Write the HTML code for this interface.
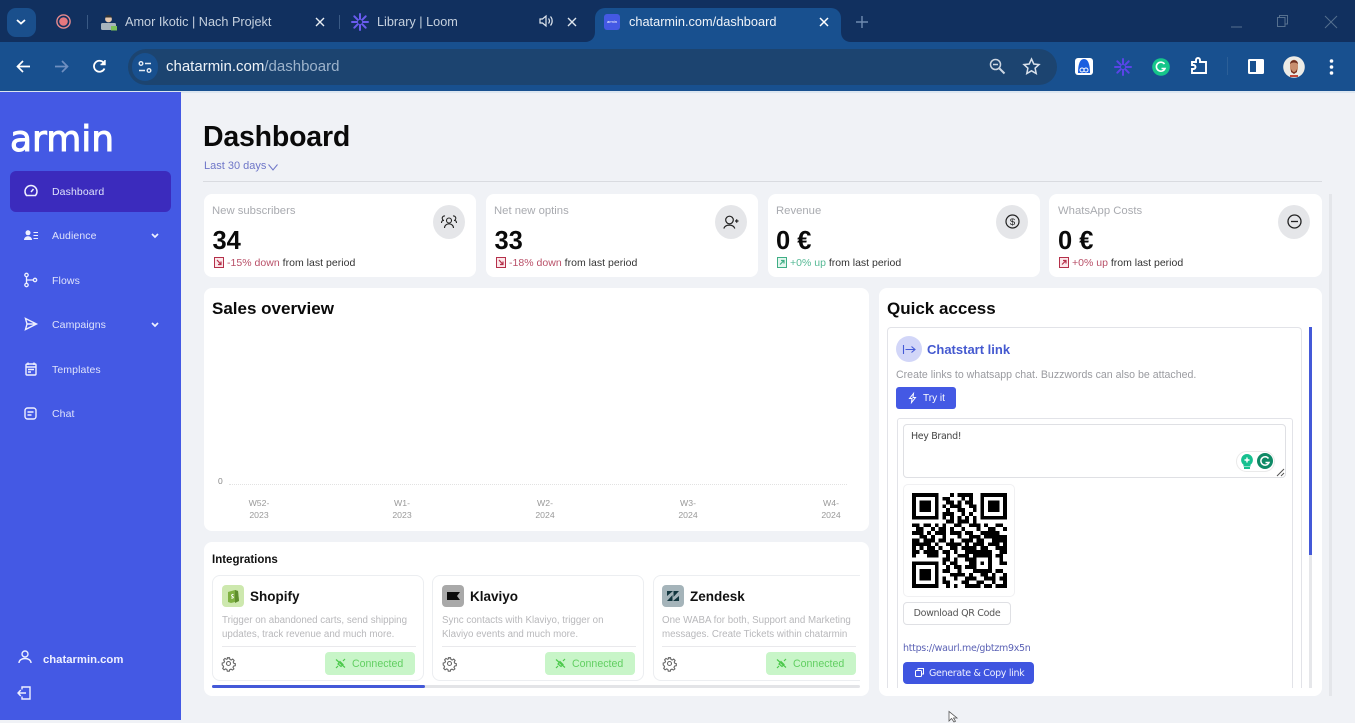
<!DOCTYPE html>
<html lang="en"><head><meta charset="utf-8"><title>chatarmin.com/dashboard</title>
<style>
*{box-sizing:border-box}
html,body{margin:0;padding:0;width:1355px;height:720px;overflow:hidden;background:#f0f2f6;font-family:"Liberation Sans",sans-serif;color:#111}
.a{position:absolute;white-space:nowrap}
.card{position:absolute;background:#fff;border-radius:8px}
.t{position:absolute;white-space:nowrap;line-height:1}
svg{position:absolute;overflow:visible}
.nav{color:#dfe3fb;font-size:10.5px;left:52px;letter-spacing:.1px}
.lbl{color:#a9abb0;font-size:11.3px}
.num{font-weight:bold;font-size:25.5px;color:#0a0a0a}
.sm{font-size:10.5px;color:#333}
.circ{position:absolute;width:32px;height:34px;border-radius:50%;background:#e5e6e9}
.ax{color:#999;font-size:8.7px;text-align:center;line-height:12px;position:absolute;width:40px;white-space:nowrap}
.ic{position:absolute;background:#fff;border:1px solid #eceef1;border-radius:8px;height:106px;top:575px}
.desc{color:#b8b8bb;font-size:9.75px;line-height:14px;position:absolute;white-space:nowrap}
.conn{position:absolute;background:#c8f5c8;color:#62cf62;border-radius:4px;width:90px;height:23px;top:652px;font-size:10.6px;line-height:24px;padding-left:27px}
.ttl{font-weight:bold;font-size:13.5px;color:#111;top:590px}
.logo{position:absolute;width:22px;height:22px;border-radius:4px;top:585px}
</style></head><body>

<!-- browser chrome -->
<div class="a" style="left:0;top:0;width:1355px;height:42px;background:#11305f"></div>
<div class="a" style="left:0;top:42px;width:1355px;height:49px;background:#18508f"></div>
<div class="a" style="left:0;top:91px;width:1355px;height:2px;background:#dce6f0"></div>
<div class="a" style="left:7px;top:8px;width:29px;height:29px;border-radius:9px;background:#1a4f8c"></div>
<svg style="left:15px;top:18px" width="12" height="8" fill="none" stroke="#fff" stroke-width="1.8"><path d="M2 2l4 3.6L10 2"/></svg>
<svg style="left:56px;top:14px" width="15" height="15"><circle cx="7.5" cy="7.5" r="6.6" fill="none" stroke="#e88a8e" stroke-width="1.4"/><circle cx="7.5" cy="7.5" r="4.3" fill="#e8787e"/></svg>
<div class="a" style="left:87px;top:15px;width:1px;height:14px;background:#3a5a85"></div>
<svg style="left:100px;top:14px" width="17" height="17"><circle cx="8.5" cy="5" r="3.4" fill="#e6c9b0"/><path d="M5 3.5C6 0 11 0 12 3.5z" fill="#333"/><rect x="1" y="9" width="15" height="7" rx="1.5" fill="#a8b4bd"/><rect x="11" y="12" width="6" height="4.5" fill="#7cc05a"/></svg>
<div class="t" style="left:125px;top:16px;font-size:12.7px;color:#c5d0de">Amor Ikotic | Nach Projekt</div>
<svg style="left:315px;top:17px" width="10" height="10" stroke="#e8edf3" stroke-width="1.4"><path d="M1 1l8 8M9 1l-8 8"/></svg>
<div class="a" style="left:339px;top:15px;width:1px;height:14px;background:#3a5a85"></div>
<svg style="left:351px;top:13px" width="18" height="18" stroke="#6a5cf0" stroke-width="2" stroke-linecap="round"><path d="M9 1v16M1 9h16M3.3 3.3l11.4 11.4M14.7 3.3L3.3 14.7"/><circle cx="9" cy="9" r="2.2" fill="#11305f" stroke="none"/></svg>
<div class="t" style="left:377px;top:16px;font-size:12.7px;color:#c5d0de">Library | Loom</div>
<svg style="left:539px;top:14px" width="15" height="14" fill="none" stroke="#dfe6ee" stroke-width="1.2"><path d="M1 5v4h2.5L7 12V2L3.500 5zM9.500 4.500c1.200 1.500 1.200 3.500 0 5M11.500 2.500c2.200 2.500 2.200 6.500 0 9"/></svg>
<svg style="left:567px;top:17px" width="10" height="10" stroke="#dfe6ee" stroke-width="1.4"><path d="M1 1l8 8M9 1l-8 8"/></svg>
<div class="a" style="left:595px;top:8px;width:246px;height:34px;background:#18508f;border-radius:10px 10px 0 0"></div>
<svg style="left:585px;top:32px" width="10" height="10"><path d="M10 0v10H0C6 10 10 6 10 0z" fill="#18508f"/></svg>
<svg style="left:841px;top:32px" width="10" height="10"><path d="M0 0v10H10C4 10 0 6 0 0z" fill="#18508f"/></svg>
<div class="a" style="left:604px;top:14px;width:16px;height:16px;background:#4459e4;border-radius:3px;color:#fff;font-size:4px;line-height:16px;text-align:center">armin</div>
<div class="t" style="left:629px;top:16px;font-size:12.75px;color:#f0f4f9">chatarmin.com/dashboard</div>
<svg style="left:819px;top:17px" width="10" height="10" stroke="#fff" stroke-width="1.500"><path d="M1 1l8 8M9 1l-8 8"/></svg>
<svg style="left:856px;top:16px" width="12" height="12" stroke="#6f8bb0" stroke-width="1.400"><path d="M6 0v12M0 6h12"/></svg>
<svg style="left:1231px;top:26px" width="11" height="2" stroke="#56708f"><path d="M0 1h11"/></svg>
<svg style="left:1277px;top:15px" width="11" height="12" fill="none" stroke="#56708f"><path d="M.5 2.500h7.500v9H.5zM2.500 2.500V.5h8v8.500H8"/></svg>
<svg style="left:1325px;top:16px" width="12" height="12" stroke="#56708f"><path d="M0 0l12 12M12 0L0 12"/></svg>

<svg style="left:16px;top:60px" width="15" height="13" fill="none" stroke="#fff" stroke-width="1.700"><path d="M14 6.500H2M7 1L1.500 6.500 7 12"/></svg>
<svg style="left:54px;top:60px" width="15" height="13" fill="none" stroke="#6f8fc0" stroke-width="1.700"><path d="M1 6.500h12M8 1l5.500 5.500L8 12"/></svg>
<svg style="left:92px;top:59px" width="15" height="15" fill="none" stroke="#fff" stroke-width="1.800"><path d="M12.500 9.500A5.500 5.500 0 1 1 11.500 3.500"/><path d="M13 1v4.500H8.500" stroke-width="1.400" fill="#fff"/></svg>
<div class="a" style="left:128px;top:49px;width:929px;height:36px;border-radius:18px;background:#1c4470"></div>
<div class="a" style="left:132px;top:53px;width:26px;height:28px;border-radius:14px;background:#18508f"></div>
<svg style="left:138px;top:60px" width="14" height="14" fill="none" stroke="#e6edf5" stroke-width="1.400"><circle cx="3" cy="3.500" r="1.800"/><path d="M7 3.500h6M1 10.500h6"/><circle cx="11" cy="10.500" r="1.800"/></svg>
<div class="t" style="left:166px;top:59px;font-size:15px;color:#eef3f8">chatarmin.com<span style="color:#9db3cb">/dashboard</span></div>
<svg style="left:989px;top:58px" width="16" height="16" fill="none" stroke="#ccd6e2" stroke-width="1.500"><circle cx="6.500" cy="6.500" r="5"/><path d="M10.500 10.500l5 5" stroke-width="2"/><path d="M4 6.500h5"/></svg>
<svg style="left:1023px;top:58px" width="17" height="17" fill="none" stroke="#d8e0ea" stroke-width="1.500"><path d="M8.500 1l2.300 5 5.200.6-3.900 3.600 1.100 5.300-4.700-2.700-4.700 2.700 1.100-5.300L1 6.600 6.200 6z"/></svg>
<div class="a" style="left:1075px;top:58px;width:18px;height:17px;border-radius:3px;background:#fff"></div>
<svg style="left:1077px;top:59px" width="14" height="15"><path d="M7 0C11 0 13 5 13 14H1C1 5 3 0 7 0z" fill="#1a5fe0"/><circle cx="5" cy="11" r="2" fill="none" stroke="#fff"/><circle cx="9" cy="11" r="2" fill="none" stroke="#fff"/></svg>
<svg style="left:1114px;top:58px" width="18" height="18" stroke="#5a44e8" stroke-width="2" stroke-linecap="round"><path d="M9 1v16M1 9h16M3.300 3.300l11.400 11.400M14.700 3.300L3.300 14.700"/><circle cx="9" cy="9" r="2" fill="#18508f" stroke="none"/></svg>
<svg style="left:1152px;top:58px" width="18" height="18"><circle cx="9" cy="9" r="8.800" fill="#16c68a"/><path d="M12.500 6A4.500 4.500 0 1 0 13 10.500H9.500" fill="none" stroke="#fff" stroke-width="1.600"/></svg>
<svg style="left:1190px;top:57px" width="19" height="19" fill="none" stroke="#fff" stroke-width="1.900"><path d="M2 5h4V3a2 2 0 0 1 4 0v2h6v11H2v-4h1.500a2 2 0 0 0 0-4H2z"/></svg>
<div class="a" style="left:1227px;top:57px;width:1px;height:18px;background:#2c5f97"></div>
<svg style="left:1248px;top:59px" width="16" height="15"><rect width="16" height="15" rx="1.500" fill="#fff"/><rect x="2" y="2" width="6" height="11" fill="#18508f"/></svg>
<svg style="left:1283px;top:56px" width="22" height="22"><circle cx="11" cy="11" r="10.800" fill="#ecebe6"/><path d="M7 9c0-7 8-7 8 0v3c0 6-8 6-8 0z" fill="#c98e6e"/><path d="M7 8c0-5 8-5 8 0-2-2-6-2-8 0z" fill="#6d2e1e"/><path d="M8 13c2 4 4 4 6 0v3l-3 2-3-2z" fill="#7b3421"/><rect x="7" y="19" width="8" height="2" fill="#c24a3a"/></svg>
<svg style="left:1329px;top:58px" width="5" height="18" fill="#fff"><circle cx="2.500" cy="3" r="1.800"/><circle cx="2.500" cy="9" r="1.800"/><circle cx="2.500" cy="15" r="1.800"/></svg>

<!-- sidebar -->
<div class="a" style="left:0;top:92px;width:181px;height:628px;background:#4459e4"></div>
<div class="t" style="left:10px;top:122px;font-size:36px;color:#fff;font-family:'DejaVu Sans',sans-serif;-webkit-text-stroke:1px #fff">armin</div>
<div class="a" style="left:10px;top:171px;width:161px;height:41px;border-radius:6px;background:#3b2bbd"></div>
<svg style="left:24px;top:184px" width="14" height="13" fill="none" stroke="#eef0ff" stroke-width="1.500"><path d="M2.500 11.500a6 6 0 1 1 9 0z"/><path d="M7 8l2.500-3"/></svg>
<div class="t nav" style="top:186.500px">Dashboard</div>
<svg style="left:24px;top:230px" width="14" height="11" fill="#eef0ff"><circle cx="4" cy="2.800" r="2.500"/><path d="M0 10c0-5 8-5 8 0z"/><path d="M9.500 2h4.500v1H9.500zM9.500 5h4.500v1H9.500zM9.500 8h4.500v1H9.500z"/></svg>
<div class="t nav" style="top:231px">Audience</div>
<svg style="left:151px;top:233px" width="8" height="6" fill="none" stroke="#eef0ff" stroke-width="1.700"><path d="M1 1l3 3 3-3"/></svg>
<svg style="left:24px;top:273px" width="14" height="14" fill="none" stroke="#eef0ff" stroke-width="1.300"><circle cx="2.500" cy="2" r="1.700"/><circle cx="2.500" cy="12" r="1.700"/><circle cx="11" cy="7" r="1.700"/><path d="M2.500 3.700v6.600M2.500 7h6.800"/></svg>
<div class="t nav" style="top:275.500px">Flows</div>
<svg style="left:24px;top:317px" width="14" height="14" fill="none" stroke="#eef0ff" stroke-width="1.400"><path d="M1.500 1.500L12.500 7 1.500 12.500 3 7zM3 7h9"/></svg>
<div class="t nav" style="top:320px">Campaigns</div>
<svg style="left:151px;top:322px" width="8" height="6" fill="none" stroke="#eef0ff" stroke-width="1.700"><path d="M1 1l3 3 3-3"/></svg>
<svg style="left:25px;top:362px" width="12" height="14" fill="none" stroke="#eef0ff" stroke-width="1.400"><rect x="1" y="2" width="10" height="11" rx="1"/><path d="M3 .5v2.500M9 .5v2.500M1 5h10M3 7.500h6M3 10h3"/></svg>
<div class="t nav" style="top:364.500px">Templates</div>
<svg style="left:24px;top:407px" width="13" height="13" fill="none" stroke="#eef0ff" stroke-width="1.400"><rect x="1" y="1" width="11" height="11" rx="2.500"/><path d="M3.500 5h6M3.500 8h4"/></svg>
<div class="t nav" style="top:409px">Chat</div>
<svg style="left:18px;top:650px" width="14" height="14" fill="none" stroke="#eef0ff" stroke-width="1.400"><circle cx="7" cy="4" r="3"/><path d="M1 13c0-6 12-6 12 0"/></svg>
<div class="t" style="left:43px;top:655px;font-size:11.300px;font-weight:bold;color:#eef0ff">chatarmin.com</div>
<svg style="left:17px;top:686px" width="14" height="14" fill="none" stroke="#eef0ff" stroke-width="1.400"><path d="M5 3.500V1h8v12H5v-2.500M9 7H1M3.800 4L1 7l2.800 3"/></svg>

<!-- header -->
<div class="t" style="left:203px;top:123px;font-size:28.500px;font-weight:bold;color:#0a0a0a;letter-spacing:-.2px">Dashboard</div>
<div class="t" style="left:204px;top:161px;font-size:11px;color:#6e76c8">Last 30 days</div>
<svg style="left:268px;top:164px" width="10" height="7" fill="none" stroke="#6e76c8"><path d="M.5 .5L5 6 9.500 .5"/></svg>
<div class="a" style="left:203px;top:181px;width:1119px;height:1px;background:#d9dbe0"></div>
<div class="a" style="left:1329px;top:194px;width:3px;height:502px;background:#e4e6ea"></div>

<!-- stat cards -->
<div class="card" style="left:204px;top:194px;width:272px;height:83px"></div>
<div class="card" style="left:486px;top:194px;width:272px;height:83px"></div>
<div class="card" style="left:768px;top:194px;width:272px;height:83px"></div>
<div class="card" style="left:1049px;top:194px;width:273px;height:83px"></div>

<div class="t lbl" style="left:212px;top:206px">New subscribers</div>
<div class="t num" style="left:212.500px;top:229px">34</div>
<div class="circ" style="left:433px;top:205px"></div>
<svg style="left:441px;top:215px" width="16" height="14" fill="none" stroke="#222" stroke-width="1.100"><circle cx="8" cy="5.500" r="2.500"/><path d="M3.500 13c0-5.500 9-5.500 9 0M3 5.500a2 2 0 0 1 1-4.500M13 5.500a2 2 0 0 0-1-4.500M.5 8c0-2 1-2.500 2-2.500M15.500 8c0-2-1-2.500-2-2.500"/></svg>
<svg style="left:214px;top:257px" width="10" height="11"><rect x=".5" y=".5" width="9" height="10" fill="#fbe7ea" stroke="#b5304a"/><path d="M3 3l4 4.500M7 4.500v3H4" fill="none" stroke="#b5304a" stroke-width="1.200"/></svg>
<div class="t sm" style="left:227px;top:258px;letter-spacing:.02px"><span style="color:#b95068">-15% down</span> from last period</div>

<div class="t lbl" style="left:494px;top:206px">Net new optins</div>
<div class="t num" style="left:494.500px;top:229px">33</div>
<div class="circ" style="left:715px;top:205px"></div>
<svg style="left:723px;top:215px" width="16" height="14" fill="none" stroke="#222" stroke-width="1.200"><circle cx="6.500" cy="5" r="3.800"/><path d="M.8 13.500c1.500-4.500 9.500-4.500 11 0M12 6h3.500M13.700 4.300v3.500"/></svg>
<svg style="left:496px;top:257px" width="10" height="11"><rect x=".5" y=".5" width="9" height="10" fill="#fbe7ea" stroke="#b5304a"/><path d="M3 3l4 4.500M7 4.500v3H4" fill="none" stroke="#b5304a" stroke-width="1.200"/></svg>
<div class="t sm" style="left:509px;top:258px;letter-spacing:.02px"><span style="color:#b95068">-18% down</span> from last period</div>

<div class="t lbl" style="left:776px;top:206px">Revenue</div>
<div class="t num" style="left:776px;top:229px">0 €</div>
<div class="circ" style="left:996px;top:205px"></div>
<svg style="left:1005px;top:214px" width="15" height="15" fill="none" stroke="#222" stroke-width="1.200"><circle cx="7.500" cy="7.500" r="6.500"/><text x="7.500" y="11" font-size="9.500" text-anchor="middle" fill="#222" stroke="none" font-family="Liberation Sans">$</text></svg>
<svg style="left:777px;top:257px" width="10" height="11"><rect x=".5" y=".5" width="9" height="10" fill="#e4f6ee" stroke="#3fae85"/><path d="M3 7.500l4-4M4 3.500h3v3" fill="none" stroke="#3fae85" stroke-width="1.200"/></svg>
<div class="t sm" style="left:790px;top:258px"><span style="color:#56b995">+0% up</span> from last period</div>

<div class="t lbl" style="left:1058px;top:206px">WhatsApp Costs</div>
<div class="t num" style="left:1058px;top:229px">0 €</div>
<div class="circ" style="left:1278px;top:205px"></div>
<svg style="left:1287px;top:214px" width="15" height="15" fill="none" stroke="#222" stroke-width="1.300"><circle cx="7.500" cy="7.500" r="6.500"/><path d="M4 7.500h7"/></svg>
<svg style="left:1059px;top:257px" width="10" height="11"><rect x=".5" y=".5" width="9" height="10" fill="#fbe7ea" stroke="#b5304a"/><path d="M3 7.500l4-4M4 3.500h3v3" fill="none" stroke="#b5304a" stroke-width="1.200"/></svg>
<div class="t sm" style="left:1072px;top:258px"><span style="color:#b95068">+0% up</span> from last period</div>

<!-- sales -->
<div class="card" style="left:204px;top:288px;width:665px;height:243px"></div>
<div class="t" style="left:212px;top:300px;font-size:17px;font-weight:bold;color:#0a0a0a">Sales overview</div>
<div class="t" style="left:218px;top:477px;font-size:8.500px;color:#888">0</div>
<div class="a" style="left:229px;top:484px;width:618px;height:0;border-top:1px dotted #e2e2e2"></div>
<div class="ax" style="left:239px;top:497px">W52-<br>2023</div>
<div class="ax" style="left:382px;top:497px">W1-<br>2023</div>
<div class="ax" style="left:525px;top:497px">W2-<br>2024</div>
<div class="ax" style="left:668px;top:497px">W3-<br>2024</div>
<div class="ax" style="left:811px;top:497px">W4-<br>2024</div>

<!-- integrations -->
<div class="card" style="left:204px;top:542px;width:665px;height:154px"></div>
<div class="t" style="left:212px;top:555px;font-size:11.500px;font-weight:bold;color:#111">Integrations</div>
<div class="ic" style="left:212px;width:212px"></div>
<div class="ic" style="left:432px;width:212px"></div>
<div class="ic" style="left:653px;width:207px;border-right:0;border-radius:8px 0 0 8px"></div>

<div class="logo" style="left:222px;background:#cde8ae"></div>
<svg style="left:227px;top:588px" width="12" height="15"><path d="M1 4l7-2 3 1 1 10-8 2-3-1z" fill="#7fb142"/><path d="M8 2l3 1 1 10-4 2z" fill="#5e8e2e"/><path d="M6.500 6.500c-2-.5-2.500 1.500-1 2s1 2-1.200 1.500" fill="none" stroke="#fff" stroke-width="1"/></svg>
<div class="t ttl" style="left:250px">Shopify</div>
<div class="desc" style="left:222px;top:614px">Trigger on abandoned carts, send shipping<br>updates, track revenue and much more.</div>
<div class="a" style="left:222px;top:646px;width:194px;height:1px;background:#e9e9ec"></div>

<div class="logo" style="left:442px;background:#a9a9a9"></div>
<svg style="left:447px;top:592px" width="13" height="8"><path d="M0 0h13l-3 4 3 4H0z" fill="#0a0a0a"/></svg>
<div class="t ttl" style="left:470px">Klaviyo</div>
<div class="desc" style="left:442px;top:614px">Sync contacts with Klaviyo, trigger on<br>Klaviyo events and much more.</div>
<div class="a" style="left:442px;top:646px;width:194px;height:1px;background:#e9e9ec"></div>

<div class="logo" style="left:662px;background:#a5b4ba"></div>
<svg style="left:667px;top:591px" width="12" height="10" fill="#12363f"><path d="M0 0h6L0 5zM12 10H6l6-5zM5.500 4v6H0zM6.500 6V0H12z"/></svg>
<div class="t ttl" style="left:690px">Zendesk</div>
<div class="desc" style="left:662px;top:614px">One WABA for both, Support and Marketing<br>messages. Create Tickets within chatarmin</div>
<div class="a" style="left:662px;top:646px;width:194px;height:1px;background:#e9e9ec"></div>

<div class="conn" style="left:325px">Connected</div>
<div class="conn" style="left:545px">Connected</div>
<div class="conn" style="left:766px">Connected</div>

<svg style="left:222px;top:656.500px" width="13" height="13" fill="none" stroke="#666" stroke-width="1.100"><circle cx="6.500" cy="6.500" r="2"/><path d="M5.500.7h2l.4 1.700 1.300.6 1.500-.9 1.400 1.400-.9 1.500.6 1.300 1.500.4v2l-1.700.4-.6 1.300.9 1.500-1.400 1.100-1.500-.9-1.300.6-.4 1.500h-2l-.4-1.700-1.300-.6-1.500.9-1.400-1.400.9-1.500-.6-1.300L.2 8v-2l1.700-.4.6-1.300-.9-1.500L3 1.400l1.500.9 1.300-.6z"/></svg>
<svg style="left:442.500px;top:656.500px" width="13" height="13" fill="none" stroke="#666" stroke-width="1.100"><circle cx="6.500" cy="6.500" r="2"/><path d="M5.500.7h2l.4 1.700 1.300.6 1.500-.9 1.400 1.400-.9 1.500.6 1.300 1.500.4v2l-1.700.4-.6 1.300.9 1.500-1.400 1.100-1.500-.9-1.300.6-.4 1.500h-2l-.4-1.700-1.300-.6-1.500.9-1.400-1.400.9-1.500-.6-1.300L.2 8v-2l1.700-.4.6-1.300-.9-1.500L3 1.400l1.500.9 1.300-.6z"/></svg>
<svg style="left:662.500px;top:656.500px" width="13" height="13" fill="none" stroke="#666" stroke-width="1.100"><circle cx="6.500" cy="6.500" r="2"/><path d="M5.500.7h2l.4 1.700 1.300.6 1.500-.9 1.400 1.400-.9 1.500.6 1.300 1.500.4v2l-1.700.4-.6 1.300.9 1.500-1.400 1.100-1.500-.9-1.300.6-.4 1.500h-2l-.4-1.700-1.300-.6-1.500.9-1.400-1.400.9-1.500-.6-1.300L.2 8v-2l1.700-.4.6-1.300-.9-1.500L3 1.400l1.500.9 1.300-.6z"/></svg>
<svg style="left:335px;top:658px" width="11" height="11" fill="none" stroke="#4cc94c" stroke-width="1.200"><path d="M1 10l2-2M10 1L8 3M1 1.500l9 8M3 6l2-2.500 3 3L6 8.500z"/></svg>
<svg style="left:555px;top:658px" width="11" height="11" fill="none" stroke="#4cc94c" stroke-width="1.200"><path d="M1 10l2-2M10 1L8 3M1 1.500l9 8M3 6l2-2.500 3 3L6 8.500z"/></svg>
<svg style="left:776px;top:658px" width="11" height="11" fill="none" stroke="#4cc94c" stroke-width="1.200"><path d="M1 10l2-2M10 1L8 3M1 1.500l9 8M3 6l2-2.500 3 3L6 8.500z"/></svg>
<div class="a" style="left:212px;top:685px;width:648px;height:3px;background:#e3e4e7;border-radius:2px"></div>
<div class="a" style="left:212px;top:685px;width:213px;height:3px;background:#4459d8;border-radius:2px"></div>

<!-- quick access -->
<div class="card" style="left:879px;top:288px;width:443px;height:408px"></div>
<div class="t" style="left:887px;top:300px;font-size:17px;font-weight:bold;color:#0a0a0a">Quick access</div>
<div class="a" style="left:887px;top:327px;width:415px;height:361px;border:1px solid #e2e3e8;border-bottom:0;border-radius:4px 4px 0 0"></div>
<div class="a" style="left:1309px;top:327px;width:3px;height:361px;background:#e6e7ea"></div>
<div class="a" style="left:1309px;top:327px;width:3px;height:228px;background:#4459d8"></div>
<div class="a" style="left:896px;top:336px;width:26px;height:26px;border-radius:50%;background:#d2d6f8"></div>
<svg style="left:903px;top:345px" width="13" height="9" fill="none" stroke="#4459d8" stroke-width="1.100"><path d="M.5 0v9M2.500 4.500H12M8.500 1.500l3.500 3-3.500 3"/></svg>
<div class="t" style="left:927px;top:343px;font-size:13px;font-weight:bold;color:#4459d0">Chatstart link</div>
<div class="t" style="left:896px;top:370px;font-size:10.600px;color:#9a9ba0">Create links to whatsapp chat. Buzzwords can also be attached.</div>
<div class="a" style="left:896px;top:387px;width:60px;height:22px;background:#4459e4;border-radius:3px"></div>
<svg style="left:908px;top:393px" width="9" height="10" fill="none" stroke="#fff"><path d="M5.500 .5L1.500 5.500h2.500L3.500 9.500 7.500 4.500H5z"/></svg>
<div class="t" style="left:923px;top:394px;font-size:10px;color:#fff">Try it</div>
<div class="a" style="left:897px;top:418px;width:396px;height:270px;border:1px solid #e2e3e8;border-bottom:0;border-radius:3px 3px 0 0"></div>
<div class="a" style="left:903px;top:424px;width:383px;height:54px;border:1px solid #dfe0e4;border-radius:4px"></div>
<div class="t" style="left:911px;top:432px;font-size:9.500px;color:#444;font-family:'DejaVu Sans',sans-serif;letter-spacing:-.35px">Hey Brand!</div>
<div class="a" style="left:1236px;top:451px;width:39px;height:21px;border:1px solid #eaeaea;border-radius:11px;background:#fff"></div>
<svg style="left:1240px;top:454px" width="14" height="15"><path d="M7 0a6 6 0 0 1 3.500 10.800V12.500h-7v-1.700A6 6 0 0 1 7 0z" fill="#16c08f"/><rect x="4" y="13" width="6" height="2" fill="#16c08f"/><path d="M7 3.500v5M4.500 6h5" stroke="#fff" stroke-width="1.400"/></svg>
<svg style="left:1257px;top:453px" width="16" height="16"><circle cx="8" cy="8" r="8" fill="#0f8a66"/><path d="M11.500 5.500A4.200 4.200 0 1 0 12 9.500H8.500" fill="none" stroke="#fff" stroke-width="1.500"/></svg>
<svg style="left:1276px;top:468px" width="9" height="9" stroke="#555"><path d="M1 8L8 1M5 8l3-3"/></svg>
<div class="a" style="left:903px;top:484px;width:112px;height:113px;border:1px solid #f0f0f2;border-radius:5px"></div>
<svg style="left:912px;top:493px" width="95" height="95" viewBox="0 0 25 25" stroke="#000" stroke-width="1.020" fill="none" shape-rendering="crispEdges"><path d="M0 .5h7M10 .5h1M12 .5h4M18 .5h7
M0 1.500h1M6 1.500h1M8 1.500h2M13 1.500h1M15 1.500h1M18 1.500h1M24 1.500h1
M0 2.500h1M2 2.500h3M6 2.500h1M9 2.500h2M12 2.500h1M14 2.500h2M18 2.500h1M20 2.500h3M24 2.500h1
M0 3.500h1M2 3.500h3M6 3.500h1M8 3.500h1M10 3.500h3M15 3.500h2M18 3.500h1M20 3.500h3M24 3.500h1
M0 4.500h1M2 4.500h3M6 4.500h1M9 4.500h1M12 4.500h2M16 4.500h1M18 4.500h1M20 4.500h3M24 4.500h1
M0 5.500h1M6 5.500h1M8 5.500h3M13 5.500h1M15 5.500h1M18 5.500h1M24 5.500h1
M0 6.500h7M8 6.500h1M10 6.500h1M12 6.500h1M14 6.500h1M16 6.500h1M18 6.500h7
M9 7.500h2M12 7.500h3M16 7.500h1
M0 8.500h2M3 8.500h2M6 8.500h1M8 8.500h1M11 8.500h2M15 8.500h3M19 8.500h1M22 8.500h2
M1 9.500h2M5 9.500h1M7 9.500h2M10 9.500h1M13 9.500h1M17 9.500h1M20 9.500h2M24 9.500h1
M0 10.500h3M4 10.500h1M6 10.500h3M10 10.500h3M14 10.500h2M18 10.500h5
M2 11.500h2M5 11.500h1M8 11.500h1M12 11.500h1M15 11.500h3M19 11.500h6
M0 12.500h2M3 12.500h3M7 12.500h2M10 12.500h1M13 12.500h3M17 12.500h2M21 12.500h4
M0 13.500h5M6 13.500h1M9 13.500h4M14 13.500h1M16 13.500h3M20 13.500h3M24 13.500h1
M0 14.500h1M2 14.500h1M4 14.500h2M7 14.500h1M10 14.500h2M13 14.500h4M18 14.500h2M22 14.500h3
M0 15.500h2M3 15.500h4M8 15.500h2M11 15.500h1M14 15.500h7M23 15.500h2
M0 16.500h1M4 16.500h3M9 16.500h1M12 16.500h3M16 16.500h5M22 16.500h2
M8 17.500h2M11 17.500h1M14 17.500h3M20 17.500h1M23 17.500h1
M0 18.500h7M8 18.500h1M10 18.500h2M15 18.500h2M18 18.500h1M20 18.500h1M23 18.500h2
M0 19.500h1M6 19.500h1M9 19.500h1M11 19.500h2M14 19.500h3M20 19.500h1
M0 20.500h1M2 20.500h3M6 20.500h1M8 20.500h2M12 20.500h1M16 20.500h5M22 20.500h2
M0 21.500h1M2 21.500h3M6 21.500h1M10 21.500h4M15 21.500h1M18 21.500h2M21 21.500h1M24 21.500h1
M0 22.500h1M2 22.500h3M6 22.500h1M8 22.500h1M11 22.500h1M14 22.500h3M19 22.500h3M23 22.500h2
M0 23.500h1M6 23.500h1M8 23.500h2M13 23.500h2M17 23.500h2M21 23.500h1M24 23.500h1
M0 24.500h7M9 24.500h1M11 24.500h1M14 24.500h4M19 24.500h2M22 24.500h3"/></svg>
<div class="a" style="left:903px;top:602px;width:108px;height:23px;border:1px solid #dfe0e4;border-radius:4px;background:#fff;color:#555;font-size:9.500px;line-height:22px;text-align:center;font-family:'DejaVu Sans',sans-serif;letter-spacing:-.3px">Download QR Code</div>
<div class="t" style="left:903px;top:644px;font-size:9.500px;color:#5b62b5;font-family:'DejaVu Sans',sans-serif;letter-spacing:-.3px">https://waurl.me/gbtzm9x5n</div>
<div class="a" style="left:903px;top:662px;width:131px;height:22px;background:#3f55e0;border-radius:4px;color:#eef0ff;font-size:9.500px;line-height:24px;padding-left:26px;font-family:'DejaVu Sans',sans-serif;letter-spacing:-.32px">Generate &amp; Copy link</div>
<svg style="left:915px;top:668px" width="9" height="9" fill="none" stroke="#fff"><rect x=".5" y="2.500" width="6" height="6" rx="1"/><path d="M3 2.500V.5h5.500V6H6.500"/></svg>

<!-- cursor -->
<svg style="left:948px;top:711px" width="11" height="12" fill="#fff" stroke="#555" stroke-width=".8"><path d="M1 .5V10l2.500-2.500L6 11l1.500-.8L5.500 7H9z"/></svg>
</body></html>
